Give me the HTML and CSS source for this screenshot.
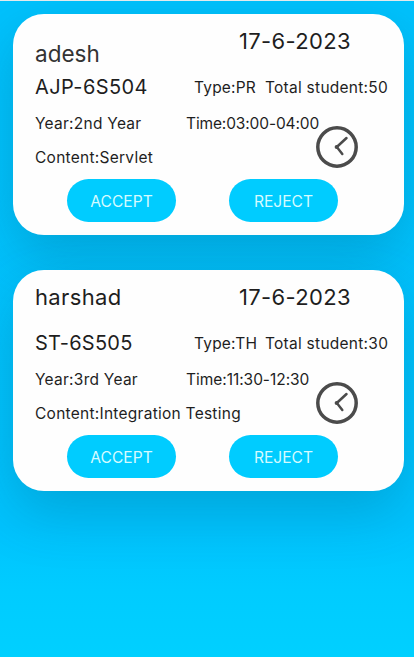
FILE: index.html
```html
<!DOCTYPE html>
<html lang="en">
<head>
<meta charset="utf-8">
<title>Requests</title>
<link rel="stylesheet" href="styles.css">
</head>
<body>
<main class="screen">
  <article class="card">
    <div class="row head"><span class="name lowered">adesh</span><span class="date">17-6-2023</span></div>
    <div class="row course"><span class="code">AJP-6S504</span><span class="type">Type:PR</span><span class="total">Total student:50</span></div>
    <div class="row when"><span class="year">Year:2nd Year</span><span class="time">Time:03:00-04:00</span></div>
    <div class="row content"><span class="topic">Content:Servlet</span>
      <svg class="clock" viewBox="0 0 42 42"><circle cx="21" cy="21" r="19.2"/><path d="M30.5 12 20.8 21l5.5 7"/><circle class="pin" cx="20.6" cy="21" r="2"/></svg>
    </div>
    <div class="actions"><button class="accept">ACCEPT</button><button class="reject">REJECT</button></div>
  </article>
  <article class="card">
    <div class="row head"><span class="name">harshad</span><span class="date">17-6-2023</span></div>
    <div class="row course"><span class="code st">ST-6S505</span><span class="type">Type:TH</span><span class="total">Total student:30</span></div>
    <div class="row when"><span class="year">Year:3rd Year</span><span class="time late">Time:11:30-12:30</span></div>
    <div class="row content"><span class="topic">Content:Integration Testing</span>
      <svg class="clock" viewBox="0 0 42 42"><circle cx="21" cy="21" r="19.2"/><path d="M30.5 12 20.8 21l5.5 7"/><circle class="pin" cx="20.6" cy="21" r="2"/></svg>
    </div>
    <div class="actions"><button class="accept">ACCEPT</button><button class="reject">REJECT</button></div>
  </article>
</main>
</body>
</html>
```
FILE: styles.css
```css
* { box-sizing: border-box; }
body { margin: 0; }
.screen {
  height: 657px;
  overflow: hidden;
  border-top: 1px solid #e4eaec;
  padding: 13px 10px 0 13px;
  display: flex;
  flex-direction: column;
  gap: 35px;
  background: linear-gradient(#00c2fd 0, #00c3fe 80%, #00ccff 90%, #00d0ff 100%);
  font-family: Inter, "Liberation Sans", sans-serif;
  color: #1e1e1e;
}
.card {
  flex: none;
  height: 221px;
  padding: 13px 0 0 22px;
  border-radius: 31px;
  background: #fefefe;
  box-shadow: 0 20px 55px rgba(0, 75, 105, .25);
}
.row { display: flex; font-size: 15.5px; white-space: nowrap; letter-spacing: .26px; }
.head { height: 28px; line-height: 28px; font-size: 22px; letter-spacing: .35px; }
.name { width: 204px; }
.lowered { padding-top: 13px; font-size: 22.5px; letter-spacing: 0; color: #333; }
.course { height: 26px; margin-top: 20px; line-height: 26px; }
.code { width: 159px; margin-top: -1px; font-size: 20px; letter-spacing: .4px; }
.st { letter-spacing: .25px; }
.type { width: 71px; letter-spacing: .2px; }
.when { height: 20px; margin-top: 13px; line-height: 20px; }
.year { width: 151px; }
.time { letter-spacing: -.13px; }
.late { letter-spacing: -.04px; }
.content { height: 20px; margin-top: 14px; line-height: 20px; }
.topic { width: 281px; }
.clock { width: 42px; height: 42px; margin-top: -22px; flex: none; fill: none; stroke: #4b4b4b; stroke-width: 3.5; stroke-linecap: round; }
.clock path { stroke-width: 2.5; }
.clock .pin { fill: #4b4b4b; stroke: none; }
.actions { display: flex; gap: 53px; margin: 11px 0 0 32px; }
button {
  width: 109px;
  height: 43px;
  padding: 2px 0 0;
  border: 0;
  border-radius: 22px;
  background: #00ccff;
  color: #d5fbff;
  font: 15.6px/41px Inter, "Liberation Sans", sans-serif;
}
```
